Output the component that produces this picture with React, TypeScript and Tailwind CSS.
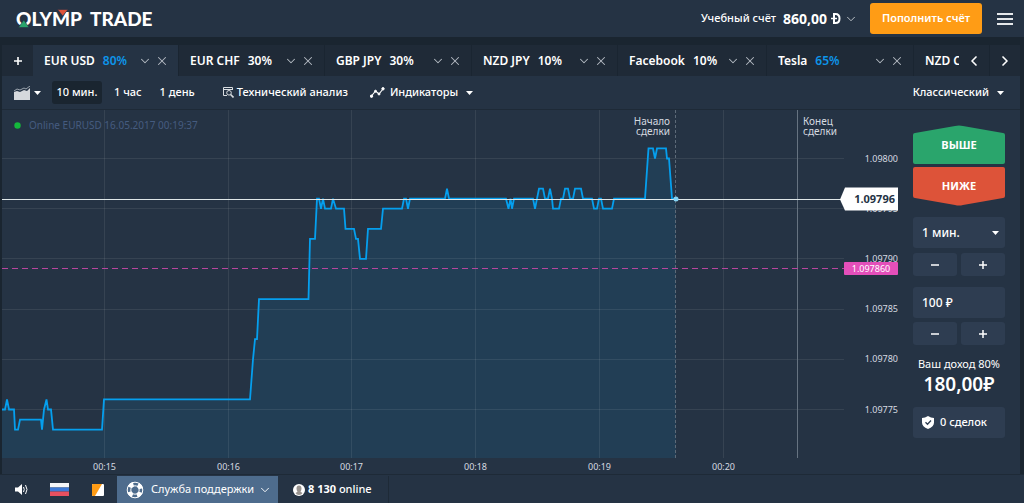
import { useState } from 'react';
import { ChevronDown, ChevronLeft, ChevronRight, X } from 'lucide-react';

interface Tab {
    name: string;
    profit: string;
    accent?: boolean;
    width: string;
}

const tabs: Tab[] = [
    { name: 'EUR USD', profit: '80%', accent: true, width: 'w-[146px]' },
    { name: 'EUR CHF', profit: '30%', width: 'w-[146px]' },
    { name: 'GBP JPY', profit: '30%', width: 'w-[147px]' },
    { name: 'NZD JPY', profit: '10%', width: 'w-[146px]' },
    { name: 'Facebook', profit: '10%', width: 'w-[149px]' },
    { name: 'Tesla', profit: '65%', accent: true, width: 'w-[147px]' },
    { name: 'NZD CHF', profit: '30%', width: 'w-[146px]' },
];

const periods = ['10 мин.', '1 час', '1 день'];

// [x, last three digits of the price]
const quotes: [number, number][] = [
    [0, 775], [3, 775], [5, 776], [7, 775], [12, 775], [13, 773], [16, 773], [18, 774], [39, 774], [40, 773],
    [42, 775], [44.5, 776], [46, 775], [49, 775], [51, 773], [100, 773], [102, 776], [248, 776], [251, 780],
    [253, 782], [255, 782], [257, 786], [306.5, 786], [308, 792], [313, 792], [315, 796], [317, 796], [319, 795],
    [321, 796], [323, 795], [329, 795], [331, 796], [334, 795], [342, 795], [343.5, 793], [352, 793], [354, 792],
    [356, 792], [358, 790], [364, 790], [366, 793], [379, 793], [381, 795], [400, 795], [402, 796], [404, 796],
    [406, 795], [408, 796], [443, 796], [445, 797], [447, 796], [504, 796], [506.5, 795], [508.5, 796], [510, 795],
    [512, 796], [531, 796], [533, 795], [535, 796], [537, 797], [541, 797], [543, 796], [546, 796], [548, 797],
    [550, 796], [551, 795], [557, 795], [559, 796], [561, 796], [563, 797], [566, 797], [568, 796], [571, 796],
    [573, 797], [579, 797], [581, 796], [590, 796], [592, 795], [595, 795], [597, 796], [599, 796], [601, 795],
    [610, 795], [612, 796], [643, 796], [646.5, 801], [651, 801], [653, 800], [655, 801], [664, 801], [665, 800],
    [667, 800], [670, 796], [674, 796],
];

const priceY = (v: number) => 48.5 + (800 - v) * 10.04;

const priceTicks = [800, 795, 790, 785, 780, 775];
const timeTicks = [
    { x: 102.5, label: '00:15' },
    { x: 226.5, label: '00:16' },
    { x: 349.5, label: '00:17' },
    { x: 473.5, label: '00:18' },
    { x: 597.5, label: '00:19' },
    { x: 721.5, label: '00:20' },
];

function Caret() {
    return (
        <svg width="7" height="4" viewBox="0 0 7 4" className="shrink-0" fill="#fff">
            <path d="M0 0h7L3.500 4z" />
        </svg>
    );
}

function Logo() {
    return (
        <a href="#" aria-label="Olymp Trade" className="block">
            <svg width="140" height="20" viewBox="0 0 140 20" className="font-['Lato',sans-serif] font-black" fontSize="19" fill="#fff">
                <text x="0" y="17">OLYMP</text>
                <text x="74" y="17">TRADE</text>
                <path d="M41.500 0.500h10.500l-5.200 6.500z" fill="#dd5339" stroke="#253344" strokeWidth="0.600" />
                <path d="M2.500 18.500h10.500l-5.200-7.500z" fill="#2aa56c" stroke="#253344" strokeWidth="0.600" />
            </svg>
        </a>
    );
}

function Header() {
    return (
        <header className="flex h-[37px] items-center bg-[#253344] pl-4 pr-[11px]">
            <Logo />
            <button className="ml-auto flex items-center text-[11px] font-medium">
                Учебный счёт
                <span className="ml-[7px] text-sm font-bold">860,00</span>
                <svg width="10" height="11" viewBox="0 0 10 11" className="ml-1" fill="none" stroke="#fff">
                    <path d="M3 1h1.500c3 0 4 2 4 4.500s-1 4.500-4 4.500H3z" strokeWidth="2" />
                    <path d="M0 5.500h6" strokeWidth="1.500" />
                </svg>
                <ChevronDown className="ml-[3px] size-3.5 text-[#c3c9cf]" strokeWidth={1.6} />
            </button>
            <button className="ml-3 h-[31px] w-28 rounded-[3px] bg-[#ff9c15] text-[11px] font-semibold">Пополнить счёт</button>
            <button aria-label="Меню" className="ml-[15px] flex w-4 flex-col gap-[3px]">
                <span className="h-0.5 w-full bg-[#e4e7ea]" />
                <span className="h-0.5 w-full bg-[#e4e7ea]" />
                <span className="h-0.5 w-full bg-[#e4e7ea]" />
            </button>
        </header>
    );
}

function TabBar() {
    const [active, setActive] = useState(0);

    return (
        <div className="flex h-[31px] bg-[#1f2a37]">
            <button aria-label="Добавить" className="flex w-[31px] shrink-0 items-center justify-center">
                <svg width="8" height="8" viewBox="0 0 8 8" stroke="#fff" strokeWidth="1.600">
                    <path d="M4 0v8M0 4h8" />
                </svg>
            </button>
            <div className="flex min-w-0 flex-1 overflow-hidden">
                {tabs.map((tab, i) => (
                    <div
                        key={tab.name}
                        className={`flex shrink-0 items-center border-r border-[#1a2531] pl-[11px] pr-[9px] ${tab.width} ${i === active ? 'bg-[#253344]' : ''}`}
                    >
                        <button onClick={() => setActive(i)} className="flex gap-2 whitespace-nowrap text-xs font-semibold">
                            {tab.name}
                            <span className={tab.accent ? 'text-[#0d95ea]' : ''}>{tab.profit}</span>
                        </button>
                        <button aria-label={`Меню ${tab.name}`} className="ml-auto text-[#b4bbc3]">
                            <ChevronDown className="size-3.5" strokeWidth={1.8} />
                        </button>
                        <button aria-label={`Закрыть ${tab.name}`} className="ml-[3px] text-[#b4bbc3]">
                            <X className="size-3.5" strokeWidth={1.8} />
                        </button>
                    </div>
                ))}
            </div>
            <button aria-label="Назад" className="flex w-[31px] shrink-0 items-center justify-center border-r border-[#1a2531]">
                <ChevronLeft className="size-4" strokeWidth={2.5} />
            </button>
            <button aria-label="Вперёд" className="flex w-[30px] shrink-0 items-center justify-center">
                <ChevronRight className="size-4" strokeWidth={2.5} />
            </button>
        </div>
    );
}

function Toolbar() {
    const [period, setPeriod] = useState(periods[0]);

    return (
        <div className="flex h-[34px] items-center border-b border-[#1e2a37] pl-3 pr-4 text-[11px]">
            <button aria-label="Тип графика" className="mr-[11px] flex items-center gap-1">
                <svg width="16" height="14" viewBox="0 0 16 14">
                    <path d="M0 14V6l3-1 3 1 4-2 3 1 3-3v12z" fill="#d5d8dc" />
                    <path d="M0 5l3-2 3 1 4-2 2 1 4-3" fill="none" stroke="#9aa3ad" />
                </svg>
                <Caret />
            </button>
            <div className="flex gap-1.5">
                {periods.map((p) => (
                    <button
                        key={p}
                        onClick={() => setPeriod(p)}
                        className={`h-[23px] whitespace-nowrap rounded-[3px] font-medium ${p === period ? 'w-[50px] bg-[#1a2530]' : 'px-1.5'}`}
                    >
                        {p}
                    </button>
                ))}
            </div>
            <button className="ml-[22px] flex items-center gap-[3px] whitespace-nowrap font-medium">
                <svg width="11" height="11" viewBox="0 0 11 11" fill="none" stroke="#d9dde1">
                    <path d="M9.500 3V.5H.5v8H4M.5 2.500H9" />
                    <circle cx="6" cy="5.800" r="2.300" />
                    <path d="M7.600 7.500l2.900 3" strokeWidth="1.600" />
                </svg>
                Технический анализ
            </button>
            <button className="ml-[22px] flex items-center whitespace-nowrap font-medium">
                <svg width="15" height="11" viewBox="0 0 15 11" fill="#fff" stroke="#fff">
                    <path d="M1.500 9l4-5L9 7l4-5" fill="none" strokeWidth="1.200" />
                    <circle cx="1.500" cy="9.200" r="1.200" />
                    <circle cx="5.500" cy="4.200" r="1" />
                    <circle cx="9" cy="7" r="1" />
                    <circle cx="13" cy="1.800" r="1.200" />
                </svg>
                <span className="ml-[5px] mr-2">Индикаторы</span>
                <Caret />
            </button>
            <button className="ml-auto flex items-center gap-2 whitespace-nowrap font-medium">
                Классический
                <Caret />
            </button>
        </div>
    );
}

function Chart() {
    const line = quotes.map(([x, v]) => `${x},${priceY(v)}`).join(' ');

    return (
        <svg viewBox="0 0 896 364" className="block w-full" fontSize="9" fill="#d5dae0">
            {/* Quotes */}
            <polygon points={`0,348 ${line} 674,348`} fill="#223e55" />

            {/* Grid */}
            <g stroke="#fff" strokeOpacity="0.08">
                {priceTicks.map((v) => (
                    <line key={v} x1="0" x2="842" y1={Math.floor(priceY(v)) + 0.5} y2={Math.floor(priceY(v)) + 0.5} />
                ))}
                {timeTicks.map((t) => (
                    <line key={t.label} x1={t.x} x2={t.x} y1="0" y2="348" />
                ))}
            </g>
            <polyline points={line} fill="none" stroke="#059fee" strokeWidth="1.800" />

            {/* Axis labels */}
            {priceTicks.map((v) => (
                <text key={v} x="896" y={priceY(v) + 3} textAnchor="end">
                    1.09{v}
                </text>
            ))}
            {timeTicks.map((t) => (
                <text key={t.label} x={t.x} y="360" textAnchor="middle">
                    {t.label}
                </text>
            ))}

            {/* Server status */}
            <circle cx="15.500" cy="15.500" r="3.200" fill="#14b83c" />
            <text x="27" y="19" fontSize="10" fill="#455c80">
                Online EURUSD 16.05.2017 00:19:37
            </text>

            {/* Deal start and end */}
            <line x1="673.5" x2="673.5" y1="0" y2="348" stroke="#5d6a78" strokeDasharray="3 2" />
            <line x1="795.5" x2="795.5" y1="0" y2="348" stroke="#667381" />
            <g fontSize="10">
                <text x="668" y="15" textAnchor="end">Начало</text>
                <text x="668" y="25" textAnchor="end">сделки</text>
                <text x="801" y="15">Конец</text>
                <text x="801" y="25">сделки</text>
            </g>

            {/* Deal level */}
            <line x1="0" x2="842" y1="158.5" y2="158.5" stroke="#b8459f" strokeDasharray="6 4" />
            <rect x="842" y="152" width="54" height="13" rx="1" fill="#e44fba" />
            <text x="869" y="161.5" textAnchor="middle" fill="#fff">
                1.097860
            </text>

            {/* Current price */}
            <line x1="0" x2="840" y1="89.5" y2="89.5" stroke="#dfe7e8" />
            <circle cx="674" cy="89" r="2.500" fill="#84d4f5" />
            <path d="M838 89.500l5-12h53v23h-53z" fill="#fff" />
            <text x="893" y="93" textAnchor="end" fontSize="11" fontWeight="700" fill="#253344">
                1.09796
            </text>
        </svg>
    );
}

function Stepper({ onStep }: { onStep: (delta: number) => void }) {
    return (
        <div className="flex gap-1">
            <button aria-label="Меньше" onClick={() => onStep(-1)} className="flex h-[23px] flex-1 items-center justify-center rounded-[3px] bg-[#2e3d51]">
                <svg width="8" height="8" viewBox="0 0 8 8" stroke="#fff" strokeWidth="1.500">
                    <path d="M0 4h8" />
                </svg>
            </button>
            <button aria-label="Больше" onClick={() => onStep(1)} className="flex h-[23px] flex-1 items-center justify-center rounded-[3px] bg-[#2e3d51]">
                <svg width="8" height="8" viewBox="0 0 8 8" stroke="#fff" strokeWidth="1.500">
                    <path d="M0 4h8M4 0v8" />
                </svg>
            </button>
        </div>
    );
}

function DealPanel() {
    const [minutes, setMinutes] = useState(1);
    const [amount, setAmount] = useState(100);

    return (
        <aside className="flex w-[122px] shrink-0 flex-col px-[15px] pt-[15px]">
            {/* Direction */}
            <button className="relative h-[39px] pt-0.5 text-[11px] font-bold">
                <svg viewBox="0 0 92 39" className="absolute inset-0 size-full" fill="#2aa56c">
                    <path d="M2 8L42 1q4-1 8 0l40 7q2 0 2 2v27q0 2-2 2H2q-2 0-2-2V10q0-2 2-2z" />
                </svg>
                <span className="relative">ВЫШЕ</span>
            </button>
            <button className="relative mt-[3px] h-[39px] text-[11px] font-bold">
                <svg viewBox="0 0 92 39" className="absolute inset-0 size-full" fill="#dd5339">
                    <path d="M2 31l40 7q4 1 8 0l40-7q2 0 2-2V2q0-2-2-2H2Q0 0 0 2v27q0 2 2 2z" />
                </svg>
                <span className="relative">НИЖЕ</span>
            </button>

            {/* Duration */}
            <div className="relative mb-[5px] mt-[11px]">
                <select
                    aria-label="Время сделки"
                    value={minutes}
                    onChange={(e) => setMinutes(Number(e.target.value))}
                    className="h-[31px] w-full appearance-none rounded-[3px] bg-[#2e3d51] px-[9px] text-xs font-medium"
                >
                    {[1, 2, 3, 4, 5].map((m) => (
                        <option key={m} value={m}>
                            {m} мин.
                        </option>
                    ))}
                </select>
                <span className="pointer-events-none absolute inset-y-0 right-1.5 flex items-center">
                    <Caret />
                </span>
            </div>
            <Stepper onStep={(d) => setMinutes(Math.min(5, Math.max(1, minutes + d)))} />

            {/* Amount */}
            <input
                aria-label="Сумма сделки"
                value={`${amount} ₽`}
                onChange={(e) => setAmount(parseInt(e.target.value, 10) || 0)}
                className="mb-1 mt-[11px] h-[31px] w-full rounded-[3px] bg-[#2e3d51] px-[9px] text-xs font-medium"
            />
            <Stepper onStep={(d) => setAmount(Math.max(0, amount + d * 10))} />

            <div className="mt-[11px] whitespace-nowrap text-center text-[11px] leading-4">Ваш доход 80%</div>
            <div className="text-center text-[19px] font-semibold leading-6">180,00₽</div>

            <button className="mt-[11px] flex h-[31px] items-center gap-1.5 whitespace-nowrap rounded-[3px] bg-[#2e3d51] px-[9px] text-[11px] font-medium">
                <svg width="12" height="13" viewBox="0 0 12 13">
                    <path d="M6 0q3 2 6 2v4.500q0 4-6 6.500-6-2.500-6-6.500V2q3 0 6-2z" fill="#fff" />
                    <path d="M3.500 6.200l2 2 3.500-3.700" fill="none" stroke="#2e3d51" strokeWidth="1.300" />
                </svg>
                0 сделок
            </button>
        </aside>
    );
}

function Footer() {
    return (
        <footer className="flex h-[29px] items-stretch border-t border-[#1e2a37] bg-[#253344] pt-px text-[11px]">
            <button aria-label="Звук" className="flex w-[43px] items-center justify-center">
                <svg width="13" height="11" viewBox="0 0 13 11" fill="#fff">
                    <path d="M0 3.500h3L7 0v11L3 7.500H0z" />
                    <path d="M8.500 3q1.500 2.500 0 5M10.500 1q3 4.500 0 9" fill="none" stroke="#fff" />
                </svg>
            </button>
            <button aria-label="Язык" className="flex w-8 items-center justify-center">
                <svg width="19" height="13" viewBox="0 0 19 13">
                    <path d="M0 0h19v4.500H0z" fill="#f5f6f8" />
                    <path d="M0 4.500h19v4H0z" fill="#3f7ad6" />
                    <path d="M0 8.500h19V13H0z" fill="#e8505f" />
                </svg>
            </button>
            <button aria-label="Тема" className="flex w-[42px] items-center justify-center pl-1">
                <svg width="12" height="12" viewBox="0 0 12 12">
                    <rect width="12" height="12" rx="1" fill="#fff" />
                    <path d="M1 0h9L3 12H1q-1 0-1-1V1q0-1 1-1z" fill="#ff9c15" />
                </svg>
            </button>
            <button className="flex w-[161px] items-center whitespace-nowrap bg-[#4e6c8d] pl-[9px]">
                <svg width="18" height="18" viewBox="0 0 18 18" fill="none">
                    <circle cx="9" cy="9" r="6" stroke="#fff" strokeWidth="4.500" strokeDasharray="4.700 4.725" strokeDashoffset="-2.350" />
                    <circle cx="9" cy="9" r="7.800" stroke="#fff" />
                    <circle cx="9" cy="9" r="4.200" stroke="#fff" />
                </svg>
                <span className="ml-[7px]">Служба поддержки</span>
                <ChevronDown className="ml-1 size-3.5" strokeWidth={1.6} />
            </button>
            <div className="flex w-[111px] items-center border-r border-[#1e2a37] pl-[15px] font-medium">
                <svg width="12" height="12" viewBox="0 0 12 12">
                    <circle cx="6" cy="6" r="6" fill="#fff" />
                    <path d="M6 1.500q2.500 0 2.500 3 0 2-1 3.200l2 1.300Q8.500 11 6 11T2.500 9l2-1.300q-1-1.200-1-3.200 0-3 2.500-3z" fill="#98938f" />
                </svg>
                <span className="ml-[3px] whitespace-nowrap">
                    <b>8 130</b> online
                </span>
            </div>
        </footer>
    );
}

export default function App() {
    return (
        <div className="min-h-screen bg-[#1a2530] font-['Noto_Sans',sans-serif] text-white">
            <Header />
            <main className="ml-0.5 mr-1 mt-2 bg-[#253344]">
                <TabBar />
                <Toolbar />
                <div className="flex">
                    <div className="min-w-0 flex-1">
                        <Chart />
                    </div>
                    <DealPanel />
                </div>
            </main>
            <Footer />
        </div>
    );
}
